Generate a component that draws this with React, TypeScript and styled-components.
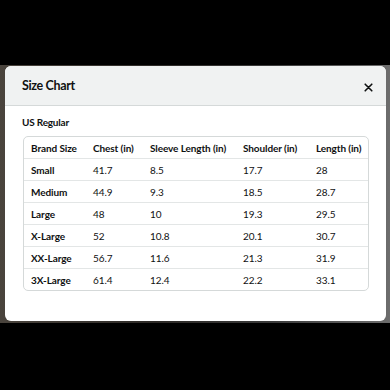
import React from 'react';
import styled, { createGlobalStyle } from 'styled-components';

const GlobalStyle = createGlobalStyle`
  html, body {
    margin: 0;
    padding: 0;
    background: #000;
  }
  body {
    font-family: Lato, 'Liberation Sans', sans-serif;
    color: #0f1111;
  }
`;

const Page = styled.div`
  width: 390px;
  height: 390px;
  background: #000;
  padding-top: 65px;
  box-sizing: border-box;
`;

const Backdrop = styled.div`
  height: 258px;
  box-sizing: border-box;
  padding: 1px 4px 2px 5px;
  background: linear-gradient(90deg, #4a443d 0%, #2d2a27 40%, #3b3b3b 70%, #6d6d6d 100%);
`;

const Modal = styled.div`
  height: 100%;
  background: #fff;
  border-radius: 6px;
  overflow: hidden;
  display: flex;
  flex-direction: column;
`;

const Header = styled.div`
  height: 39px;
  flex-shrink: 0;
  background: #f0f2f2;
  border-bottom: 1px solid #d5d9d9;
  display: flex;
  align-items: center;
  justify-content: space-between;
  padding: 0 13px 0 17px;
`;

const Title = styled.h2`
  margin: 0;
  font-size: 12.5px;
  font-weight: 700;
  letter-spacing: -0.35px;
`;

const Close = styled.button`
  border: 0;
  background: none;
  padding: 0;
  width: 10px;
  height: 10px;
  display: flex;
  align-items: center;
  justify-content: center;
  margin-top: 3px;
`;

const Body = styled.div`
  padding: 9px 17px 0 18px;
`;

const Subtitle = styled.div`
  font-size: 10px;
  font-weight: 700;
  letter-spacing: -0.2px;
  height: 14px;
  line-height: 14px;
  margin: 0 0 7px -1px;
`;

const Table = styled.div`
  border: 1px solid #d5d9d9;
  border-radius: 5px;
  overflow: hidden;
`;

const Row = styled.div<{ $last?: boolean }>`
  display: grid;
  grid-template-columns: 62px 57px 93px 73px 1fr;
  height: 21px;
  align-items: center;
  padding-left: 7px;
  border-bottom: ${(p) => (p.$last ? 'none' : '1px solid #e3e6e6')};
`;

const Cell = styled.div<{ $bold?: boolean }>`
  font-size: 10px;
  font-weight: ${(p) => (p.$bold ? 700 : 400)};
  letter-spacing: -0.1px;
  white-space: nowrap;
  color: #0f1111;
`;

const columns = ['Brand Size', 'Chest (in)', 'Sleeve Length (in)', 'Shoulder (in)', 'Length (in)'];

const rows = [
  ['Small', '41.7', '8.5', '17.7', '28'],
  ['Medium', '44.9', '9.3', '18.5', '28.7'],
  ['Large', '48', '10', '19.3', '29.5'],
  ['X-Large', '52', '10.8', '20.1', '30.7'],
  ['XX-Large', '56.7', '11.6', '21.3', '31.9'],
  ['3X-Large', '61.4', '12.4', '22.2', '33.1'],
];

export default function App() {
  return (
    <Page>
      <GlobalStyle />
      <Backdrop>
        <Modal>
          <Header>
            <Title>Size Chart</Title>
            <Close aria-label="Close">
              <svg width="9" height="9" viewBox="0 0 9 9">
                <path d="M1.2 1.2 L7.8 7.8 M7.8 1.2 L1.2 7.8" stroke="#0f1111" strokeWidth="1.6" strokeLinecap="round" />
              </svg>
            </Close>
          </Header>
          <Body>
            <Subtitle>US Regular</Subtitle>
            <Table>
              <Row>
                {columns.map((c) => (
                  <Cell key={c} $bold>
                    {c}
                  </Cell>
                ))}
              </Row>
              {rows.map((r, i) => (
                <Row key={r[0]} $last={i === rows.length - 1}>
                  {r.map((v, j) => (
                    <Cell key={j} $bold={j === 0}>
                      {v}
                    </Cell>
                  ))}
                </Row>
              ))}
            </Table>
          </Body>
        </Modal>
      </Backdrop>
    </Page>
  );
}
